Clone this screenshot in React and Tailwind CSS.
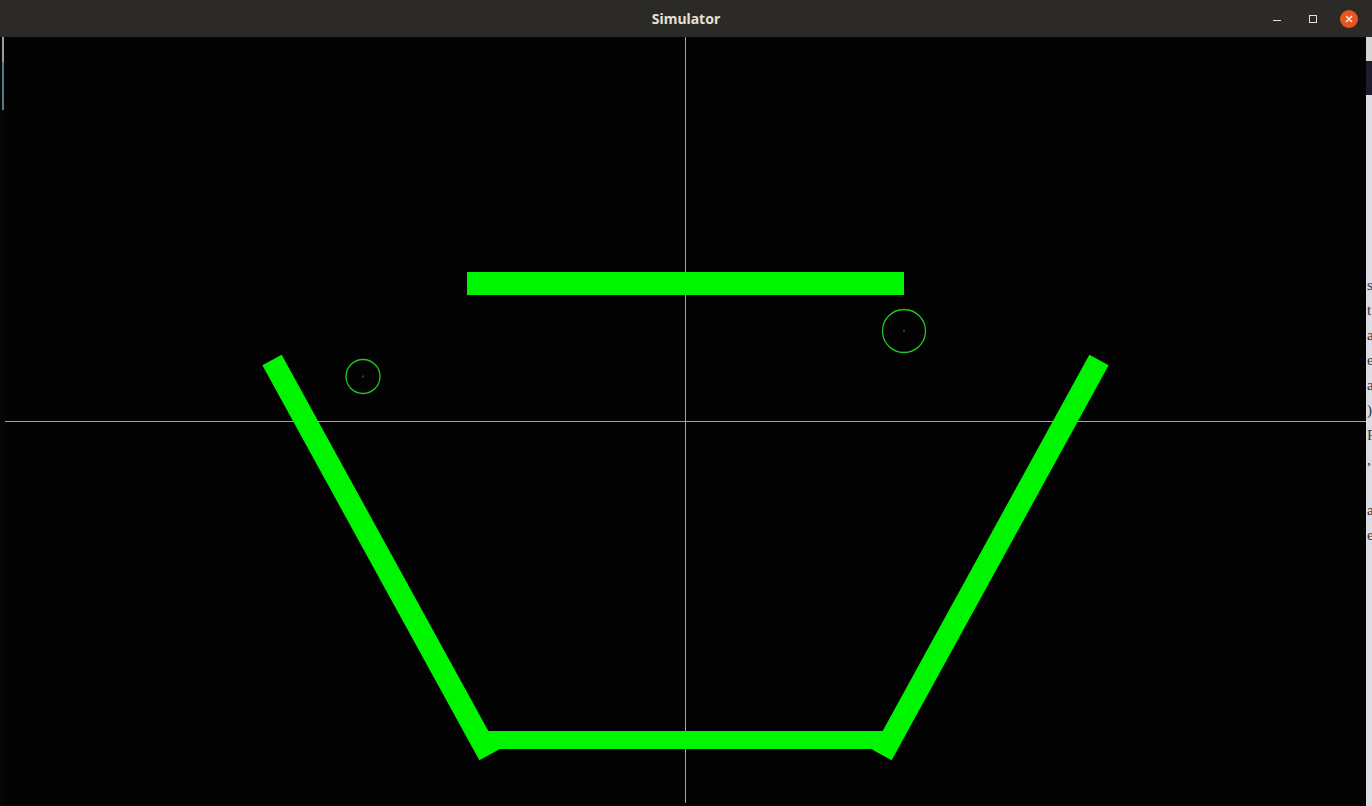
import React from 'react'

const stripLines = ['s', 't', 'a', 'e', 'a', ')', 'F', ',', '', 'a', 'e']

function TitleBar() {
  return (
    <div className="relative flex h-[37px] w-full items-center justify-center bg-[#2c2a26]">
      <span className="font-['Noto_Sans',sans-serif] text-[14px] font-bold text-[#e4e0d8]">Simulator</span>
      <div className="absolute right-[14px] top-0 flex h-full items-center gap-[18px]">
        <div className="flex h-[18px] w-[18px] items-center justify-center">
          <div className="mt-[4px] h-[1px] w-[8px] bg-[#e4e0d8]" />
        </div>
        <div className="flex h-[18px] w-[18px] items-center justify-center">
          <div className="h-[8px] w-[8px] border border-[#e4e0d8]" />
        </div>
        <div className="flex h-[18px] w-[18px] items-center justify-center rounded-full bg-[#e9541f]">
          <svg width="8" height="8" viewBox="0 0 8 8">
            <path d="M1 1 L7 7 M7 1 L1 7" stroke="#fbe6dc" strokeWidth="1.6" />
          </svg>
        </div>
      </div>
    </div>
  )
}

function Scene() {
  const green = '#00f500'
  return (
    <svg className="block h-full w-full" viewBox="5 37 1361 769" preserveAspectRatio="none">
      <rect x="5" y="37" width="1361" height="769" fill="#030303" />
      {/* axes */}
      <line x1="685.5" y1="37" x2="685.5" y2="803" stroke="#33ee33" strokeWidth="1" shapeRendering="crispEdges" />
      <line x1="5" y1="421.5" x2="1366" y2="421.5" stroke="#33ee33" strokeWidth="1" shapeRendering="crispEdges" />
      {/* paddle */}
      <rect x="467" y="272" width="437" height="23" fill={green} />
      {/* bucket */}
      <line x1="272" y1="360" x2="489" y2="755" stroke={green} strokeWidth="22" />
      <line x1="1099" y1="360" x2="882" y2="755" stroke={green} strokeWidth="22" />
      <rect x="487" y="731" width="396" height="18" fill={green} />
      {/* balls */}
      <circle cx="363" cy="376.5" r="17" fill="none" stroke="#22c622" strokeWidth="1.3" />
      <rect x="362.5" y="375.5" width="1" height="2" fill="#22aa22" />
      <circle cx="904" cy="331" r="21.5" fill="none" stroke="#22c622" strokeWidth="1.3" />
      <rect x="903.5" y="330" width="1" height="2" fill="#22aa22" />
    </svg>
  )
}

export default function App() {
  return (
    <div className="flex h-[806px] w-[1372px] flex-col overflow-hidden bg-black">
      <TitleBar />
      <div className="flex flex-1">
        <div className="flex w-[5px] flex-col bg-[#050505] pl-[2px]">
          <div className="h-[25px] w-[2px] bg-[#9c9a96]" />
          <div className="h-[48px] w-[2px] bg-[#4f7f80]" />
        </div>
        <div className="flex-1">
          <Scene />
        </div>
        <div className="flex w-[6px] flex-col bg-[#dcdce4]">
          <div className="h-[24px] bg-[#d6d6d6]" />
          <div className="h-[34px] bg-[#1c1c2c]" />
          <div className="flex flex-col overflow-hidden pt-[178px] font-['Liberation_Serif',serif] text-[15px] leading-[25px] text-[#333]">
            {stripLines.map((c, i) => (
              <span key={i} className="h-[25px] pl-[1px]">{c}</span>
            ))}
          </div>
        </div>
      </div>
    </div>
  )
}
